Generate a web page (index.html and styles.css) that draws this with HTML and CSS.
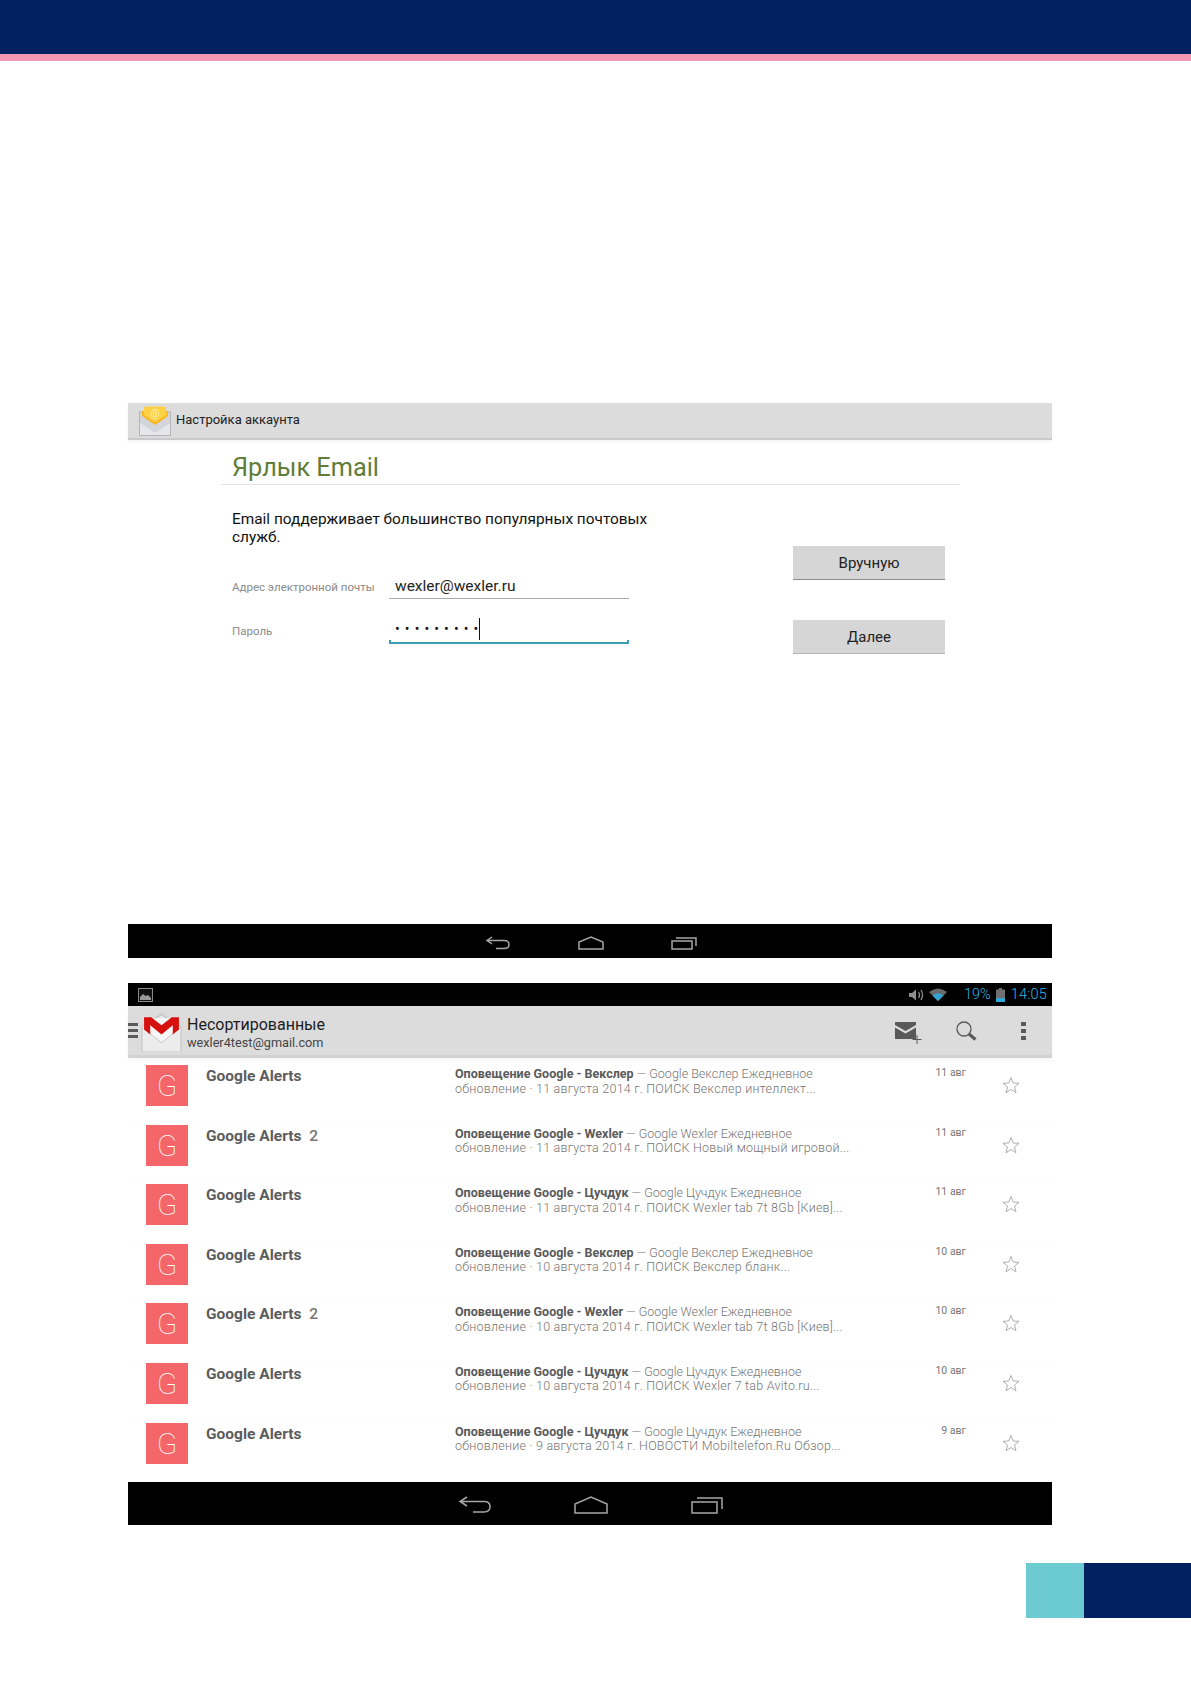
FILE: index.html
```html
<!DOCTYPE html>
<html lang="ru">
<head>
    <meta charset="UTF-8">
    <meta name="viewport" content="width=device-width, initial-scale=1.0">
    <title>Настройка аккаунта</title>
    <link rel="stylesheet" href="styles.css">
</head>
<body>
    <div class="page-top"></div>

    <!-- Email app: account setup -->
    <div class="screen screen-setup">
        <div class="setup-bar">
            <svg class="setup-logo" viewBox="0 0 32 30">
                <rect x="0.5" y="6" width="31" height="23.5" fill="#d3d5da" stroke="#a9abb0" stroke-width="0.8"/>
                <path d="M1 17 L16 27 L31 17 V29 H1 Z" fill="#e6e7ea"/>
                <path d="M3 5 H29 V10 L16 19 L3 10 Z" fill="#f8b81e"/>
                <path d="M5 2 Q5 0.5 6.5 0.5 H25.5 Q27 0.5 27 2 V9 L16 16.5 L5 9 Z" fill="#fdd045"/>
                <text class="setup-logo-at" x="16" y="11" text-anchor="middle">@</text>
            </svg>
            <span class="setup-bar-title">Настройка аккаунта</span>
        </div>
        <div class="setup-body">
            <h1 class="setup-heading">Ярлык Email</h1>
            <div class="setup-content">
                <div class="setup-form">
                    <p class="setup-intro">Email поддерживает большинство популярных почтовых служб.</p>
                    <div class="form-row form-row-email">
                        <label class="form-label">Адрес электронной почты</label>
                        <div class="form-input">wexler@wexler.ru</div>
                    </div>
                    <div class="form-row form-row-pass">
                        <label class="form-label">Пароль</label>
                        <div class="form-input form-input-active"><span class="pass-dots">•••••••••</span><span class="caret"></span></div>
                    </div>
                </div>
                <div class="setup-actions">
                    <div class="button button-first">Вручную</div>
                    <div class="button">Далее</div>
                </div>
            </div>
        </div>
        <div class="nav-bar nav-small">
            <svg class="nav-icon" viewBox="0 0 26 14"><path d="M7 1 L2 4.5 L7 8 M2 4.5 H19 Q24 4.5 24 8.5 Q24 12.5 19 12.5 H11" /></svg>
            <svg class="nav-icon" viewBox="0 0 26 14"><path d="M1 13 V6 L13 1 L25 6 V13 Z" /></svg>
            <svg class="nav-icon" viewBox="0 0 26 14"><path d="M1 5 H21 V13 H1 Z M5 2 H25 V10" /></svg>
        </div>
    </div>

    <!-- Gmail: inbox -->
    <div class="screen screen-inbox">
        <div class="status-bar">
            <svg class="status-pic" viewBox="0 0 15 14"><rect x="0.5" y="0.5" width="14" height="13" fill="#111" stroke="#8a8a8a"/><path d="M2 12 V9 L5 6 L7.5 8 L10 7 L13 10 V12 Z" fill="#9a9a9a"/></svg>
            <div class="status-right">
                <svg class="status-sound" viewBox="0 0 15 12"><path d="M0 4 H3 L7 0.5 V11.5 L3 8 H0 Z" fill="#8f8f8f"/><path d="M9.5 3 Q11.5 6 9.5 9 M12 1 Q15 6 12 11" fill="none" stroke="#8f8f8f" stroke-width="1.3"/></svg>
                <svg class="status-wifi" viewBox="0 0 18 13"><path d="M0 4 Q9 -3 18 4 L9 13 Z" fill="#6a6a6a"/><path d="M3.5 7.5 Q9 3 14.5 7.5 L9 13 Z" fill="#33a5d5"/></svg>
                <span class="status-pct">19%</span>
                <svg class="status-batt" viewBox="0 0 9 14"><path d="M3 0 H6 V1.5 H9 V14 H0 V1.5 H3 Z" fill="#6f6f6f"/><rect y="10" width="9" height="4" fill="#33a5d5"/></svg>
                <span class="status-time">14:05</span>
            </div>
        </div>
        <div class="action-bar">
            <div class="menu-lines"><i></i><i></i><i></i></div>
            <svg class="gmail-logo" viewBox="0 0 40 39">
                <path d="M20 0 L31 9 H9 Z" fill="#cfcfcf"/>
                <path d="M1 14 L20 3 L39 14 V38 Q39 39 38 39 H2 Q1 39 1 38 Z" fill="#ececec" stroke="#bcbcbc" stroke-width="0.8"/>
                <path d="M8 6 H32 V22 L20 31 L8 22 Z" fill="#f7f7f7"/>
                <path d="M1 15 L20 30 L39 15" fill="none" stroke="#cfcfcf" stroke-width="1"/>
                <path d="M3 5 H10 L20 13 L30 5 H37 V17 L31 22 V13 L20 22 L9 13 V22 L3 17 Z" fill="#d6100f"/>
            </svg>
            <div class="action-titles">
                <div class="action-title">Несортированные</div>
                <div class="action-sub">wexler4test@gmail.com</div>
            </div>
            <div class="action-icons">
                <svg class="icon-compose" viewBox="0 0 27 22"><path d="M0 0 H21 V3 L10.5 9 L0 3 Z M0 5.5 L10.5 11.5 L21 5.5 V17 H0 Z" fill="#595959"/><path d="M22 13 V22 M17.5 17.5 H26.5" stroke="#595959" stroke-width="1" fill="none"/></svg>
                <svg class="icon-search" viewBox="0 0 21 20"><circle cx="8" cy="8" r="7" fill="none" stroke="#595959" stroke-width="1.3"/><path d="M13 13 L19.5 18.5" stroke="#595959" stroke-width="3"/></svg>
                <div class="icon-more"><i></i><i></i><i></i></div>
            </div>
        </div>
        <div class="mail-list">
            <div class="mail-row">
                <div class="mail-tile">G</div>
                <div class="mail-sender">Google Alerts</div>
                <div class="mail-text"><b>Оповещение Google - Векслер</b> — Google Векслер Ежедневное<br><span class="mail-line">обновление · 11 августа 2014 г. ПОИСК Векслер интеллект...</span></div>
                <div class="mail-date">11 авг</div>
                <svg class="mail-star" viewBox="0 0 18 18"><path d="M9 1.5 L11.2 7 L17 7.3 L12.5 11 L14 16.7 L9 13.5 L4 16.7 L5.5 11 L1 7.3 L6.8 7 Z"/></svg>
            </div>
            <div class="mail-row">
                <div class="mail-tile">G</div>
                <div class="mail-sender">Google Alerts <span class="mail-count">2</span></div>
                <div class="mail-text"><b>Оповещение Google - Wexler</b> — Google Wexler Ежедневное<br><span class="mail-line">обновление · 11 августа 2014 г. ПОИСК Новый мощный игровой...</span></div>
                <div class="mail-date">11 авг</div>
                <svg class="mail-star" viewBox="0 0 18 18"><path d="M9 1.5 L11.2 7 L17 7.3 L12.5 11 L14 16.7 L9 13.5 L4 16.7 L5.5 11 L1 7.3 L6.8 7 Z"/></svg>
            </div>
            <div class="mail-row">
                <div class="mail-tile">G</div>
                <div class="mail-sender">Google Alerts</div>
                <div class="mail-text"><b>Оповещение Google - Цучдук</b> — Google Цучдук Ежедневное<br><span class="mail-line">обновление · 11 августа 2014 г. ПОИСК Wexler tab 7t 8Gb [Киев]...</span></div>
                <div class="mail-date">11 авг</div>
                <svg class="mail-star" viewBox="0 0 18 18"><path d="M9 1.5 L11.2 7 L17 7.3 L12.5 11 L14 16.7 L9 13.5 L4 16.7 L5.5 11 L1 7.3 L6.8 7 Z"/></svg>
            </div>
            <div class="mail-row">
                <div class="mail-tile">G</div>
                <div class="mail-sender">Google Alerts</div>
                <div class="mail-text"><b>Оповещение Google - Векслер</b> — Google Векслер Ежедневное<br><span class="mail-line">обновление · 10 августа 2014 г. ПОИСК Векслер бланк...</span></div>
                <div class="mail-date">10 авг</div>
                <svg class="mail-star" viewBox="0 0 18 18"><path d="M9 1.5 L11.2 7 L17 7.3 L12.5 11 L14 16.7 L9 13.5 L4 16.7 L5.5 11 L1 7.3 L6.8 7 Z"/></svg>
            </div>
            <div class="mail-row">
                <div class="mail-tile">G</div>
                <div class="mail-sender">Google Alerts <span class="mail-count">2</span></div>
                <div class="mail-text"><b>Оповещение Google - Wexler</b> — Google Wexler Ежедневное<br><span class="mail-line">обновление · 10 августа 2014 г. ПОИСК Wexler tab 7t 8Gb [Киев]...</span></div>
                <div class="mail-date">10 авг</div>
                <svg class="mail-star" viewBox="0 0 18 18"><path d="M9 1.5 L11.2 7 L17 7.3 L12.5 11 L14 16.7 L9 13.5 L4 16.7 L5.5 11 L1 7.3 L6.8 7 Z"/></svg>
            </div>
            <div class="mail-row">
                <div class="mail-tile">G</div>
                <div class="mail-sender">Google Alerts</div>
                <div class="mail-text"><b>Оповещение Google - Цучдук</b> — Google Цучдук Ежедневное<br><span class="mail-line">обновление · 10 августа 2014 г. ПОИСК Wexler 7 tab Avito.ru...</span></div>
                <div class="mail-date">10 авг</div>
                <svg class="mail-star" viewBox="0 0 18 18"><path d="M9 1.5 L11.2 7 L17 7.3 L12.5 11 L14 16.7 L9 13.5 L4 16.7 L5.5 11 L1 7.3 L6.8 7 Z"/></svg>
            </div>
            <div class="mail-row">
                <div class="mail-tile">G</div>
                <div class="mail-sender">Google Alerts</div>
                <div class="mail-text"><b>Оповещение Google - Цучдук</b> — Google Цучдук Ежедневное<br><span class="mail-line">обновление · 9 августа 2014 г. НОВОСТИ Mobiltelefon.Ru Обзор...</span></div>
                <div class="mail-date">9 авг</div>
                <svg class="mail-star" viewBox="0 0 18 18"><path d="M9 1.5 L11.2 7 L17 7.3 L12.5 11 L14 16.7 L9 13.5 L4 16.7 L5.5 11 L1 7.3 L6.8 7 Z"/></svg>
            </div>
        </div>
        <div class="nav-bar nav-large">
            <svg class="nav-icon" viewBox="0 0 34 18"><path d="M9 1 L2 5.5 L9 10 M2 5.5 H26 Q32 5.5 32 10.5 Q32 16 26 16 H15" /></svg>
            <svg class="nav-icon" viewBox="0 0 34 18"><path d="M1 17 V8 L17 1 L33 8 V17 Z" /></svg>
            <svg class="nav-icon" viewBox="0 0 34 18"><path d="M2 6 H27 V17 H2 Z M7 2 H32 V13" /></svg>
        </div>
    </div>

    <div class="page-footer">
        <div class="footer-teal"></div>
        <div class="footer-navy"></div>
    </div>
</body>
</html>
```

FILE: styles.css
```css
* {
    margin: 0;
    padding: 0;
    box-sizing: border-box;
}

body {
    background: white;
    font-family: Roboto, 'Liberation Sans', sans-serif;
}

.page-top {
    height: 61px;
    background: #00205f;
    border-bottom: 7px solid #f595b4;
}

.screen {
    width: 924px;
    margin-left: 128px;
    display: flex;
    flex-direction: column;
}

.screen-setup {
    margin-top: 342px;
    height: 555px;
}

.screen-inbox {
    margin-top: 25px;
    height: 542px;
}

/* setup screen */
.setup-bar {
    height: 37px;
    background: #dcdcdc;
    border-bottom: 2px solid #c9c9c9;
    box-shadow: 0 2px 3px rgba(0, 0, 0, 0.05);
    display: flex;
    align-items: center;
    padding-left: 11px;
    flex-shrink: 0;
}

.setup-logo {
    width: 32px;
    height: 30px;
}

.setup-logo-at {
    font-size: 10px;
    fill: #fff3c4;
}

.setup-bar-title {
    margin-left: 5px;
    padding-bottom: 2px;
    font-size: 13px;
    color: #222;
}

.setup-body {
    flex: 1;
    padding: 0 92px 0 93px;
}

.setup-heading {
    font-size: 25.3px;
    font-weight: 400;
    color: #5f7d38;
    line-height: 30px;
    padding: 13px 0 1px 11px;
    border-bottom: 1px solid #e6e6e6;
}

.setup-content {
    display: flex;
    padding-left: 11px;
}

.setup-form {
    width: 561px;
}

.setup-intro {
    width: 440px;
    margin-top: 26px;
    font-size: 15.4px;
    line-height: 17.5px;
    color: #111;
}

.form-row {
    display: flex;
    align-items: flex-end;
}

.form-row-email {
    margin-top: 27px;
}

.form-row-pass {
    margin-top: 17px;
}

.form-label {
    width: 157px;
    font-size: 11.5px;
    color: #8a8a8a;
    padding-bottom: 5px;
}

.form-row-pass .form-label {
    padding-bottom: 6px;
}

.form-input {
    position: relative;
    width: 240px;
    height: 26px;
    padding: 4px 0 0 6px;
    font-size: 15.5px;
    line-height: 18px;
    color: #222;
    border-bottom: 1px solid #aaa;
}

.form-input-active {
    height: 28px;
    display: flex;
    align-items: center;
    padding-top: 0;
    border-bottom: 2px solid #3a9db3;
}

/* small end ticks of the focused field */
.form-input-active::before,
.form-input-active::after {
    content: "";
    position: absolute;
    bottom: -2px;
    width: 2px;
    height: 4px;
    background: #3a9db3;
}

.form-input-active::before {
    left: 0;
}

.form-input-active::after {
    right: 0;
}

.pass-dots {
    font-size: 14px;
    letter-spacing: 5.1px;
    color: #111;
    margin-right: -4px;
}

.caret {
    width: 1px;
    height: 22px;
    background: #111;
}

.setup-actions {
    display: flex;
    flex-direction: column;
    gap: 40px;
    padding-top: 61px;
}

.button {
    width: 152px;
    height: 34px;
    background: #d6d6d6;
    border-bottom: 1px solid #b5b5b5;
    font-size: 15px;
    line-height: 34px;
    text-align: center;
    color: #222;
}

.button-first {
    border-bottom-color: #8e8e8e;
}

/* system bars */
.nav-bar {
    background: black;
    display: flex;
    justify-content: center;
    align-items: center;
    flex-shrink: 0;
}

.nav-small {
    height: 34px;
    gap: 67px;
    padding-left: 2px;
}

.nav-small .nav-icon {
    width: 26px;
    height: 14px;
    margin-top: 3px;
}

.nav-large {
    height: 43px;
    gap: 82px;
    padding-left: 1px;
}

.nav-large .nav-icon {
    width: 34px;
    height: 18px;
    margin-top: 3px;
}

.nav-icon path {
    fill: none;
    stroke: #a6a6a6;
    stroke-width: 1.5;
}

.status-bar {
    height: 23px;
    background: black;
    display: flex;
    align-items: center;
    justify-content: space-between;
    padding: 0 5px 0 10px;
    flex-shrink: 0;
}

.status-pic {
    width: 15px;
    height: 14px;
}

.status-right {
    display: flex;
    align-items: center;
    color: #33b5e5;
    font-size: 14.5px;
    font-weight: 300;
}

.status-sound {
    width: 15px;
    height: 12px;
}

.status-wifi {
    width: 18px;
    height: 13px;
    margin-left: 5px;
}

.status-pct {
    margin-left: 17px;
}

.status-batt {
    width: 9px;
    height: 14px;
    margin-left: 5px;
}

.status-time {
    margin-left: 6px;
    letter-spacing: 0.2px;
}

.action-bar {
    height: 49px;
    background: #dcdcdc;
    box-shadow: 0 3px 0 #d2d2d2, 0 6px 4px rgba(0, 0, 0, 0.03);
    display: flex;
    align-items: center;
    flex-shrink: 0;
    position: relative;
}

.menu-lines {
    width: 10px;
    display: flex;
    flex-direction: column;
    gap: 3px;
}

.menu-lines i {
    height: 3px;
    background: #595959;
}

.gmail-logo {
    width: 41px;
    height: 40px;
    margin-left: 3px;
    margin-top: 2px;
}

.action-titles {
    margin-left: 5px;
    padding-top: 5px;
}

.action-title {
    font-size: 16px;
    line-height: 19px;
    color: #1c1c1c;
}

.action-sub {
    font-size: 12.7px;
    line-height: 17px;
    color: #444;
}

.action-icons {
    margin-left: auto;
    display: flex;
    align-items: center;
    padding-right: 26px;
}

.icon-compose {
    width: 27px;
    height: 22px;
    margin-top: 4px;
}

.icon-search {
    width: 21px;
    height: 20px;
    margin-left: 34px;
}

.icon-more {
    margin-left: 44px;
    width: 5px;
    display: flex;
    flex-direction: column;
    gap: 3px;
}

.icon-more i {
    height: 4px;
    background: #595959;
}

/* message list */
.mail-list {
    flex: 1;
    padding-top: 10px;
    overflow: hidden;
}

.mail-row {
    height: 59.6px;
    display: grid;
    grid-template-columns: 42px 267px 400px 111px 84px;
    padding-left: 18px;
    align-items: start;
    border-bottom: 1px solid #fcfcfc;
}

.mail-tile {
    width: 42px;
    height: 41px;
    background: #f4666a;
    color: white;
    font-size: 30px;
    font-weight: 100;
    line-height: 41px;
    text-align: center;
}

.mail-sender {
    padding-left: 18px;
    font-size: 15.5px;
    font-weight: 700;
    line-height: 22px;
    color: #5c5c5c;
}

.mail-count {
    margin-left: 4px;
    font-weight: 500;
    color: #777;
}

.mail-text {
    padding-top: 2px;
    font-size: 12.5px;
    line-height: 14.5px;
    color: #747474;
    font-weight: 300;
    white-space: nowrap;
}

.mail-text b {
    font-weight: 700;
    color: #5a5a5a;
}

.mail-line {
    letter-spacing: 0.23px;
}

.mail-date {
    text-align: right;
    font-size: 10.5px;
    line-height: 14px;
    padding-top: 1px;
    color: #777;
}

.mail-star {
    width: 18px;
    height: 18px;
    margin: 11px 0 0 36px;
}

.mail-star path {
    fill: none;
    stroke: #9a9a9a;
    stroke-width: 0.8;
}

.page-footer {
    margin-top: 38px;
    height: 55px;
    display: flex;
    justify-content: flex-end;
}

.footer-teal {
    width: 58px;
    background: #6ccbd0;
}

.footer-navy {
    width: 107px;
    background: #00205f;
}
```
